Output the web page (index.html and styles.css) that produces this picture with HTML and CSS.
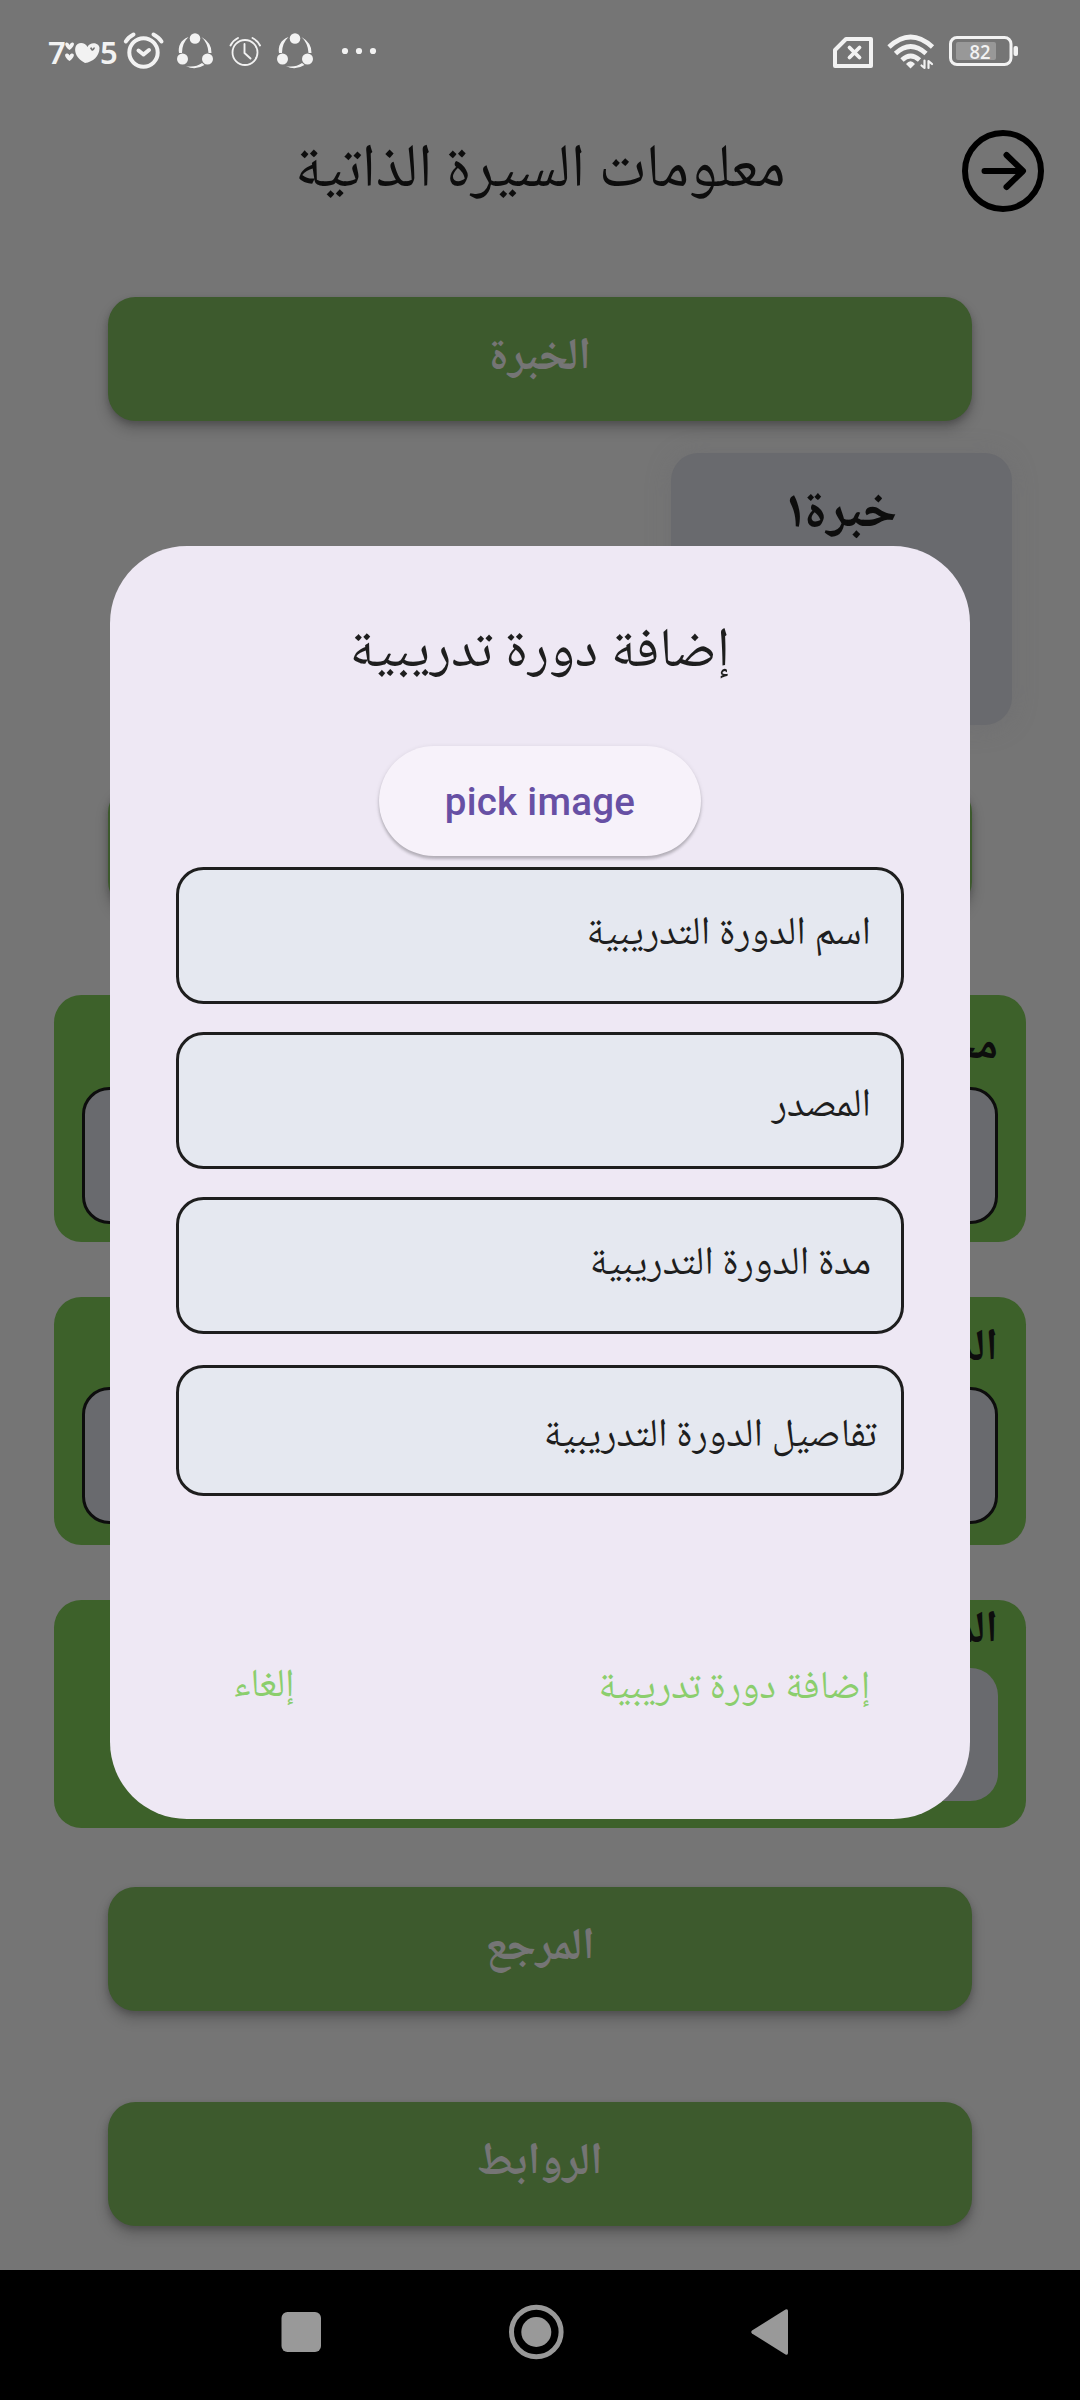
FILE: index.html
```html
<!DOCTYPE html>
<html lang="ar" dir="rtl">
<head>
<meta charset="utf-8">
<title>معلومات السيرة الذاتية</title>
<link rel="stylesheet" href="styles.css">
</head>
<body>
<div class="screen">
  <header class="status">
    <svg class="status-icons" viewBox="0 0 1080 100" fill="none" stroke-linecap="round" stroke-linejoin="round">
      <g fill="#f2f2f2">
        <text class="clock" x="48" y="64">7</text>
        <text class="clock" x="100" y="64">5</text>
        <path d="M69.500 50C64 46 64.500 42 67 42.500Q69 43 69.500 45Q70 43 72 42.500C75 42 75 46 69.500 50ZM69.500 61C64 57 64 53 67.500 53.500Q69 54 69.500 55.500Q70 54 71.500 53.500C75 53 75 57 69.500 61Z"/>
        <path d="M85 63C77 59 74 52 75.500 47C77 41.500 85 41.500 87.500 47C90 41.500 99 42.500 99.500 48C99.500 56 93 62 85 63Z"/>
        <path d="M90 48.500Q91.500 46 92.500 49Q94 46 95 48Q94 51 92 51Z" fill="#757575"/>
      </g>
      <g stroke="#f2f2f2">
        <circle cx="143.500" cy="52.500" r="14.200" stroke-width="4"/>
        <path d="M138.500 50.500L143.500 54.500L149 50M125.800 41.500Q128 37.500 133.500 34.500M161.500 41.500Q159 37.500 153.500 34.500" stroke-width="4"/>
        <circle cx="245" cy="52.500" r="12.500" stroke-width="1.800"/>
        <path d="M244.500 44V53L250.500 58.500M230.500 45.500Q233 40.500 238 38M260 45.500Q257.500 40.500 252.500 38" stroke-width="1.900"/>
      </g>
      <g fill="#f2f2f2" id="share">
        <circle cx="195" cy="38.500" r="5.300"/><circle cx="182.500" cy="59" r="5.500"/><circle cx="207.500" cy="59" r="5.500"/>
        <path d="M188.500 37C180 40 178 47 179 53H182Q182 43 188.500 37ZM201.500 37Q208 43 208.500 53H211.500Q212 43 201.500 37ZM186 66Q195 71 204.500 65L202 63Q195 68 186 66Z"/>
      </g>
      <use href="#share" x="100"/>
      <g fill="#f2f2f2"><circle cx="345" cy="51" r="3.100"/><circle cx="359" cy="51" r="3.100"/><circle cx="373" cy="51" r="3.100"/></g>
      <g stroke="#f2f2f2">
        <path d="M846 39H871V66H835V50Z" stroke-width="4"/>
        <path d="M849.500 47.500L859.500 57.500M859.500 47.500L849.500 57.500" stroke-width="3.800"/>
        <g stroke-width="4.800" stroke-linecap="butt"><path d="M889 47Q910.500 27 932.500 47M895.500 53.500Q910.500 39.500 926 53.500M902 60Q910.500 52 919.500 60"/></g>
        <path d="M924.500 60.500V68L921.500 65.500M928.500 68V61L932 64" stroke-width="2.200"/>
        <rect x="950.500" y="37.500" width="60.500" height="27" rx="6.500" stroke-width="3"/>
      </g>
      <path d="M906 64Q910.500 58.500 915 64L910.500 68.500Z" fill="#f2f2f2"/>
      <rect x="956" y="42" width="40" height="18" rx="2" fill="#989898"/>
      <rect x="1013.500" y="46" width="4.500" height="10" rx="2" fill="#f2f2f2"/>
      <text class="battery" x="969.500" y="58.500" textLength="21" lengthAdjust="spacingAndGlyphs">82</text>
    </svg>
  </header>

  <div class="appbar">
    <svg class="back" viewBox="0 0 82 82" fill="none" stroke="#000" stroke-width="6" stroke-linecap="round" stroke-linejoin="round">
      <circle cx="41" cy="41" r="38"/><path d="M22.500 41H60.500M44.500 25L61 41L44.500 57"/>
    </svg>
    <h1 class="title"><span>معلومات السيرة الذاتية</span></h1>
  </div>

  <main class="page">
    <button class="wide first">الخبرة</button>
    <div class="card"><span>خبرة١</span></div>
    <button class="wide second"></button>
    <section class="group g1"><h2>مجال</h2><div class="slot"></div></section>
    <section class="group g2"><h2>الدولة</h2><div class="slot"></div></section>
    <section class="group g3"><h2>المهارات</h2><div class="slot plain"></div></section>
    <button class="wide third">المرجع</button>
    <button class="wide fourth">الروابط</button>
  </main>

  <nav class="nav">
    <svg viewBox="0 0 1080 130" fill="#999">
      <rect x="281.500" y="42" width="39.500" height="40" rx="6"/>
      <circle cx="536.300" cy="62" r="24.800" fill="none" stroke="#999" stroke-width="5"/><circle cx="536.300" cy="62" r="15"/>
      <path d="M752 60.500L785.500 39.500Q788 38.500 788 41V83Q788 85.500 785.500 84.500L752 63.500Q750.500 62 752 60.500Z"/>
    </svg>
  </nav>

  <div class="dialog">
    <h2 class="dialog-title"><span>إضافة دورة تدريبية</span></h2>
    <button class="pick" dir="ltr">pick image</button>
    <div class="fields">
      <div class="field f1"><span>اسم الدورة التدريبية</span></div>
      <div class="field f2"><span>المصدر</span></div>
      <div class="field f3"><span>مدة الدورة التدريبية</span></div>
      <div class="field f4"><span>تفاصيل الدورة التدريبية</span></div>
    </div>
    <div class="actions"><span class="add">إضافة دورة تدريبية</span><span class="cancel">إلغاء</span></div>
  </div>
</div>
</body>
</html>
```
FILE: styles.css
```css
* { box-sizing: border-box; }
body, h1, h2 { margin: 0; font-weight: 400; }
button { border: 0; padding: 0; font: inherit; }
.screen {
  position: relative; width: 1080px; height: 2400px; overflow: hidden;
  display: flex; flex-direction: column; background: #757575; color: #0d0d0d;
  font-family: "Noto Naskh Arabic UI", "Noto Naskh Arabic", "Noto Sans Arabic", Roboto, "DejaVu Sans", sans-serif;
}
span { display: inline-block; white-space: nowrap; }
.status { height: 100px; }
.status-icons { display: block; width: 1080px; height: 100px; }
.clock { font: 600 31px "Noto Sans", sans-serif; direction: ltr; }
.battery { font: 600 20px "Open Sans", sans-serif; fill: #f2f2f2; direction: ltr; }
.appbar { height: 197px; display: grid; grid-template-columns: 82px 1fr 82px; padding: 30px 36px 0; }
.back { width: 82px; height: 82px; }
.title { font-size: 61px; line-height: 82px; text-align: center; height: 82px; }
.page { display: flex; flex-direction: column; height: 1973px; }
.wide {
  flex: none; width: 864px; height: 124px; margin: 0 auto; border-radius: 27.5px; background: #3d5a2d; color: #757575;
  font-size: 45px; font-weight: 700; line-height: 120px; padding-bottom: 2px; box-shadow: 0 8px 14px rgba(0,0,0,.2), 0 3px 6px rgba(0,0,0,.18);
}
.card {
  flex: none; width: 341px; height: 272px; margin: 32px 68px 60px auto; border-radius: 27.5px; background: #696a6e;
  text-align: center; font-size: 53px; font-weight: 700; line-height: 122px; box-shadow: 0 2px 24px rgba(105,106,110,.4);
}
.group { flex: none; width: 972px; margin: 0 54px; height: 247px; padding: 0 28px; border-radius: 27.5px; background: #3d612a; }
.group h2 { font-size: 45px; font-weight: 700; height: 92px; line-height: 104px; }
.slot { height: 137px; border: 3px solid #0d0d0d; border-radius: 27.5px; background: #696a6e; }
.g1 { margin-top: 86px; }
.g2 { margin-top: 55px; height: 248px; }
.g2 h2 { height: 90px; line-height: 103px; }
.g3 { margin-top: 55px; height: 228px; }
.g3 h2 { height: 68px; line-height: 61px; }
.plain { border: 0; height: 133px; width: 700px; }
.third { margin-top: 59px; }
.fourth { margin-top: 91px; }
.nav { height: 130px; background: #000; }
.nav svg { display: block; width: 1080px; height: 130px; }
.dialog {
  position: absolute; left: 110px; top: 545.5px; width: 860px; height: 1273px; border-radius: 77px; background: #eee8f4;
  display: flex; flex-direction: column; color: #1e1e1e;
}
.dialog-title { height: 200px; font-size: 55.4px; line-height: 212px; text-align: center; }
.pick {
  width: 322px; height: 110px; margin: 0 auto; border-radius: 55px; background: #f7f2fa; color: #6750a4;
  font: 500 38.5px/112px Roboto, sans-serif; letter-spacing: .28px; box-shadow: 0 3px 3px rgba(0,0,0,.2), 0 1px 5px rgba(0,0,0,.1);
}
.fields { padding: 11px 66px 0; display: flex; flex-direction: column; gap: 27.5px; }
.field { height: 137.5px; border: 3px solid #1e1e1e; border-radius: 27.5px; background: #e5e8f0; padding: 0 30px; font-size: 39.7px; line-height: 129px; }
.f2 { line-height: 143px; }
.f4 { height: 131.5px; margin-top: 3px; padding: 0 24px; line-height: 136px; }
.actions { display: flex; justify-content: space-between; padding: 157px 99px 0 123px; font-size: 39.6px; line-height: 70px; color: #8bce6d; }
.cancel { line-height: 66px; }
```
